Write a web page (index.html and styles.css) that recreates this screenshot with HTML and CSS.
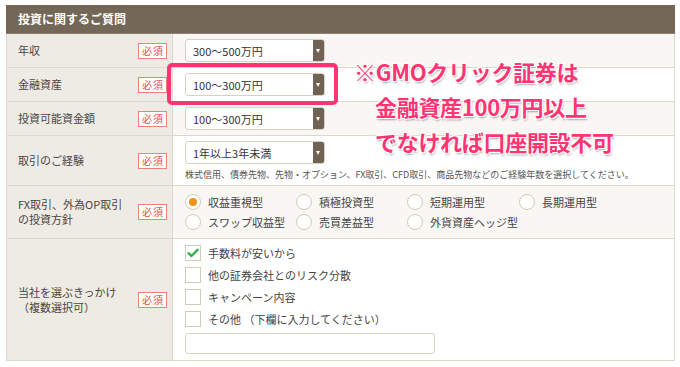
FILE: index.html
```html
<!DOCTYPE html>
<html lang="ja">
<head>
    <meta charset="UTF-8">
    <title>投資に関するご質問</title>
    <link rel="stylesheet" href="styles.css">
</head>
<body>
    <div class="page">
        <div class="form-table">
            <div class="form-head">投資に関するご質問</div>

            <div class="form-row">
                <div class="label-cell"><span>年収</span><span class="req">必須</span></div>
                <div class="field-cell">
                    <div class="select"><span>300〜500万円</span><i class="arrow"></i></div>
                </div>
            </div>

            <div class="form-row white">
                <div class="label-cell"><span>金融資産</span><span class="req">必須</span></div>
                <div class="field-cell">
                    <div class="select"><span>100〜300万円</span><i class="arrow"></i></div>
                </div>
            </div>

            <div class="form-row">
                <div class="label-cell"><span>投資可能資金額</span><span class="req">必須</span></div>
                <div class="field-cell">
                    <div class="select"><span>100〜300万円</span><i class="arrow"></i></div>
                </div>
            </div>

            <div class="form-row white row-exp">
                <div class="label-cell"><span>取引のご経験</span><span class="req">必須</span></div>
                <div class="field-cell">
                    <div class="select"><span>1年以上3年未満</span><i class="arrow"></i></div>
                    <p class="hint">株式信用、債券先物、先物・オプション、FX取引、CFD取引、商品先物などのご経験年数を選択してください。</p>
                </div>
            </div>

            <div class="form-row row-fx">
                <div class="label-cell"><span>FX取引、外為OP取引<br>の投資方針</span><span class="req">必須</span></div>
                <div class="field-cell">
                    <div class="radios">
                        <label class="radio"><i class="dot on"></i>収益重視型</label>
                        <label class="radio"><i class="dot"></i>積極投資型</label>
                        <label class="radio"><i class="dot"></i>短期運用型</label>
                        <label class="radio"><i class="dot"></i>長期運用型</label>
                        <label class="radio"><i class="dot"></i>スワップ収益型</label>
                        <label class="radio"><i class="dot"></i>売買差益型</label>
                        <label class="radio"><i class="dot"></i>外貨資産ヘッジ型</label>
                    </div>
                </div>
            </div>

            <div class="form-row white row-reason">
                <div class="label-cell"><span>当社を選ぶきっかけ<br>（複数選択可）</span><span class="req">必須</span></div>
                <div class="field-cell">
                    <div class="checks">
                        <label class="check"><i class="box">
                            <svg width="12" height="10" viewBox="0 0 12 10"><path d="M1.5 5.2 L4.5 8 L10.5 1.8" fill="none" stroke="#35b04a" stroke-width="2.4" stroke-linecap="round" stroke-linejoin="round"/></svg>
                        </i>手数料が安いから</label>
                        <label class="check"><i class="box"></i>他の証券会社とのリスク分散</label>
                        <label class="check"><i class="box"></i>キャンペーン内容</label>
                        <label class="check"><i class="box"></i>その他 （下欄に入力してください）</label>
                    </div>
                    <div class="text-input"></div>
                </div>
            </div>
        </div>

        <div class="highlight"></div>
        <div class="note">
            <p class="note1">※GMOクリック証券は</p>
            <p class="note2">金融資産100万円以上</p>
            <p class="note3">でなければ口座開設不可</p>
        </div>
    </div>
</body>
</html>
```

FILE: styles.css
```css
:root {
    --head: #736858;
    --label-bg: #eeebe4;
    --light-bg: #f8f7f3;
    --line: #ddd8cc;
    --text: #4a4541;
    --pink: #ff3573;
}

body {
    margin: 0;
    padding: 0;
    background: #fff;
    font-family: "Noto Sans CJK JP", "Noto Sans", sans-serif;
    color: var(--text);
}

.page {
    position: relative;
    width: 680px;
    height: 367px;
    padding: 5px 5px 0 6px;
    box-sizing: border-box;
}

.form-table {
    border: 1px solid var(--line);
    border-top: none;
}

.form-head {
    height: 28px;
    background: var(--head);
    color: #fff;
    font-size: 12px;
    font-weight: bold;
    line-height: 28px;
    padding-left: 12px;
    border-bottom: 1px solid #8b8172;
    margin: 0 -1px;
}

.form-row {
    display: flex;
    border-bottom: 1px solid var(--line);
    background: var(--light-bg);
}

.form-row:last-child {
    border-bottom: none;
}

.form-row.white {
    background: #fff;
}

.label-cell {
    width: 149px;
    flex: none;
    display: flex;
    align-items: center;
    justify-content: space-between;
    padding: 0 5px 0 11px;
    background: var(--label-bg);
    border-right: 1px solid var(--line);
    font-size: 11px;
    line-height: 15px;
}

.req {
    display: inline-block;
    width: 27px;
    height: 14px;
    line-height: 14px;
    border: 1px solid #ee8274;
    background: #fff;
    color: #e8503e;
    font-size: 10px;
    text-align: center;
    letter-spacing: 1px;
    text-indent: 1px;
}

.field-cell {
    flex: 1;
    padding: 5px 0 5px 12px;
}

.select {
    width: 131px;
    height: 21px;
    display: flex;
    align-items: center;
    justify-content: space-between;
    border: 1px solid #d8d1c2;
    border-radius: 3px;
    background: #fff;
    font-size: 11px;
    color: #333;
    padding-left: 7px;
    overflow: hidden;
}

.arrow {
    width: 11px;
    height: 21px;
    background: #6e6354;
    position: relative;
}

.arrow::after {
    content: "";
    position: absolute;
    left: 3px;
    top: 9px;
    border-left: 2.5px solid transparent;
    border-right: 2.5px solid transparent;
    border-top: 4px solid #fff;
}

.row-exp .field-cell {
    padding: 5px 0 4px 12px;
}

.hint {
    margin: 5px 0 0;
    font-size: 9px;
    line-height: 12px;
    color: #555;
    white-space: nowrap;
}

.row-fx .field-cell {
    padding: 8px 0 8px 12px;
}

.radios {
    display: grid;
    grid-template-columns: 111px 111px 112px 100px;
    row-gap: 4px;
}

.radio,
.check {
    display: flex;
    align-items: center;
    gap: 6px;
    font-size: 11px;
    line-height: 16px;
    color: #444;
}

.dot {
    width: 14px;
    height: 14px;
    border: 1px solid #d3cbb9;
    border-radius: 50%;
    background: #fff;
    position: relative;
    margin-right: 1px;
}

.dot.on::after {
    content: "";
    position: absolute;
    left: 3px;
    top: 3px;
    width: 8px;
    height: 8px;
    border-radius: 50%;
    background: #f39019;
}

.row-reason .field-cell {
    padding: 6px 0 6px 12px;
}

.checks {
    display: flex;
    flex-direction: column;
    gap: 6px;
}

.box {
    width: 14px;
    height: 14px;
    border: 1px solid #d3cbb9;
    background: #fff;
    display: flex;
    align-items: center;
    justify-content: center;
    margin-right: 1px;
}

.text-input {
    margin-top: 6px;
    width: 248px;
    height: 19px;
    border: 1px solid #dcd5c5;
    border-radius: 3px;
    background: #fff;
}

/* annotation overlay */
.highlight {
    position: absolute;
    left: 167px;
    top: 63px;
    width: 163px;
    height: 34px;
    border: 4px solid var(--pink);
    border-radius: 5px;
}

.note {
    position: absolute;
    left: 354px;
    top: 54px;
    color: var(--pink);
    font-size: 22px;
    font-weight: bold;
    line-height: 35px;
    letter-spacing: -0.3px;
    text-shadow: -1px -1px 0 #fff, 1px -1px 0 #fff, -1px 1px 0 #fff, 1px 1px 0 #fff, 1px 2px 2px rgba(0, 0, 0, 0.35);
}

.note p {
    margin: 0;
    white-space: nowrap;
}

.note2,
.note3 {
    padding-left: 21px;
}
```
